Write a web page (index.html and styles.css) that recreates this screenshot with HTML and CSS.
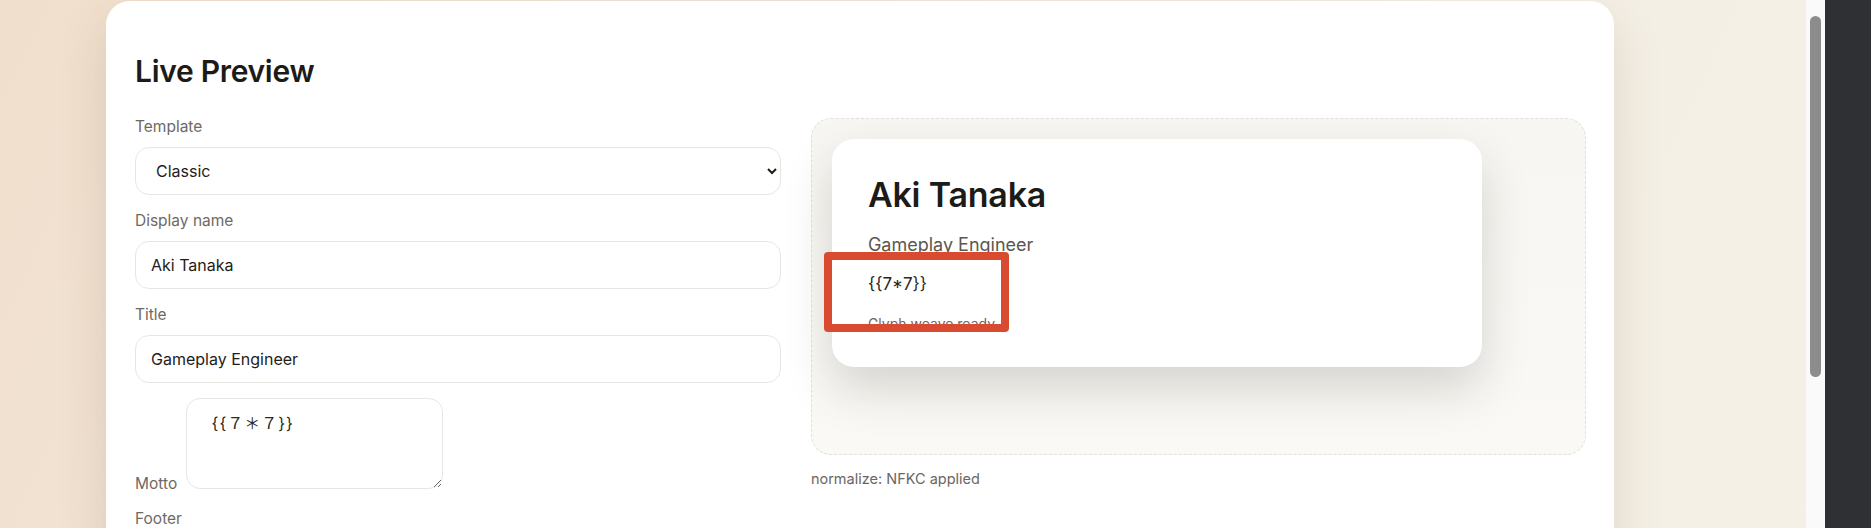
FILE: index.html
```html
<!DOCTYPE html>
<html lang="en">
<head>
<meta charset="utf-8">
<title>Live Preview</title>
<link rel="stylesheet" href="styles.css">
</head>
<body>
<div class="screen">
  <div class="viewport">
    <main class="card">
      <h2 class="heading">Live Preview</h2>
      <div class="layout">
        <form class="form">
          <label class="field">
            <span class="lbl">Template</span>
            <select class="control">
              <option>Classic</option>
              <option>Modern</option>
            </select>
          </label>
          <label class="field">
            <span class="lbl">Display name</span>
            <input class="control" type="text" value="Aki Tanaka">
          </label>
          <label class="field">
            <span class="lbl">Title</span>
            <input class="control" type="text" value="Gameplay Engineer">
          </label>
          <label class="field-inline">Motto <textarea class="motto">{{７＊７}}</textarea></label>
          <label class="field">
            <span class="lbl">Footer</span>
            <input class="control" type="text" value="Glyph weave ready">
          </label>
        </form>
        <section class="preview-col">
          <div class="panel">
            <div class="pcard">
              <div class="p-name">Aki Tanaka</div>
              <div class="p-title">Gameplay Engineer</div>
              <div class="p-motto">{{7*7}}</div>
              <div class="p-footer">Glyph weave ready</div>
            </div>
            <div class="highlight"></div>
          </div>
          <p class="note">normalize: NFKC applied</p>
        </section>
      </div>
    </main>
  </div>
  <div class="scrollbar"><div class="thumb"></div></div>
  <div class="side"></div>
</div>
</body>
</html>
```

FILE: styles.css
```css
* { box-sizing: border-box; }
html, body { margin: 0; padding: 0; }
body {
  font-family: Inter, "Noto Sans", sans-serif;
  color: #1d1b18;
  overflow: hidden;
}
.screen {
  display: flex;
  width: 1871px;
  height: 528px;
  overflow: hidden;
}
.viewport {
  flex: 1;
  height: 528px;
  overflow: hidden;
  background: linear-gradient(115deg, #f1dfcd 0%, #f2e7da 40%, #f4efe5 70%, #f4f0e6 100%);
}
.scrollbar {
  width: 19px;
  background: #fafafa;
  padding: 16px 4px 0 4px;
}
.thumb {
  width: 11px;
  height: 361px;
  border-radius: 6px;
  background: #8c8c8c;
}
.side {
  width: 46px;
  background: #2f3033;
}
.card {
  width: 1508px;
  margin: 1px 0 0 106px;
  background: #ffffff;
  border-radius: 24px;
  padding: 28px 28px 40px 29px;
  box-shadow: 0 18px 50px rgba(90, 60, 30, 0.14);
  min-height: 700px;
}
.heading {
  margin: 24px 0 28px;
  font-size: 30px;
  line-height: 1.2;
  font-weight: 600;
  letter-spacing: -0.3px;
  color: #1d1b18;
}
.layout {
  display: grid;
  grid-template-columns: 1fr 1.2fr;
  column-gap: 30px;
  align-items: start;
  padding-top: 1px;
}
.form {
  display: flex;
  flex-direction: column;
  gap: 17px;
}
.field {
  display: flex;
  flex-direction: column;
  gap: 11px;
}
.lbl, .field-inline {
  font-size: 15.5px;
  line-height: 18px;
  color: #6f6962;
}
.field-inline {
  margin-top: -2px;
}
.control {
  font: inherit;
  font-size: 16px;
  color: #1f1c19;
  height: 48px;
  border: 1px solid #e9e6e2;
  border-radius: 14px;
  background: #fff;
  padding: 0 15px;
  margin: 0;
  width: 100%;
}
select.control {
  padding-left: 16px;
  padding-right: 8px;
}
.motto {
  display: inline-block;
  vertical-align: baseline;
  margin: 0 0 0 4px;
  width: 257px;
  height: 91px;
  border: 1px solid #e9e6e2;
  border-radius: 14px;
  background: #fff;
  padding: 13px 16px 12px 25px;
  font-family: Inter, "Noto Sans CJK JP", sans-serif;
  font-size: 16px;
  line-height: 1.4;
  letter-spacing: 1px;
  color: #2b2722;
}
.preview-col {
  display: flex;
  flex-direction: column;
}
.panel {
  position: relative;
  height: 337px;
  border: 1px dashed #e3e0db;
  border-radius: 20px;
  background: linear-gradient(180deg, #f7f6f2 0%, #faf9f6 100%);
  padding: 20px;
}
.pcard {
  max-width: 650px;
  background: #fff;
  border-radius: 22px;
  padding: 36px 36px 34px;
  box-shadow: 0 22px 48px rgba(45, 38, 25, 0.17);
  display: flex;
  flex-direction: column;
  gap: 16px;
}
.p-name {
  font-size: 34px;
  line-height: 1.2;
  font-weight: 600;
  letter-spacing: -0.2px;
  color: #1d1b18;
}
.p-title {
  font-size: 18px;
  line-height: 1.4;
  color: #5b5650;
}
.p-motto {
  font-size: 17px;
  line-height: 1.4;
  color: #2b2722;
}
.p-footer {
  font-size: 14px;
  line-height: 1.4;
  color: #6b6660;
  margin-top: 1px;
}
.highlight {
  position: absolute;
  left: 12px;
  top: 133px;
  width: 185px;
  height: 80px;
  border: 8px solid #d84b31;
  border-radius: 4px;
}
.note {
  margin: 15px 0 0;
  font-size: 14.5px;
  line-height: 18px;
  color: #6b6660;
}
```
